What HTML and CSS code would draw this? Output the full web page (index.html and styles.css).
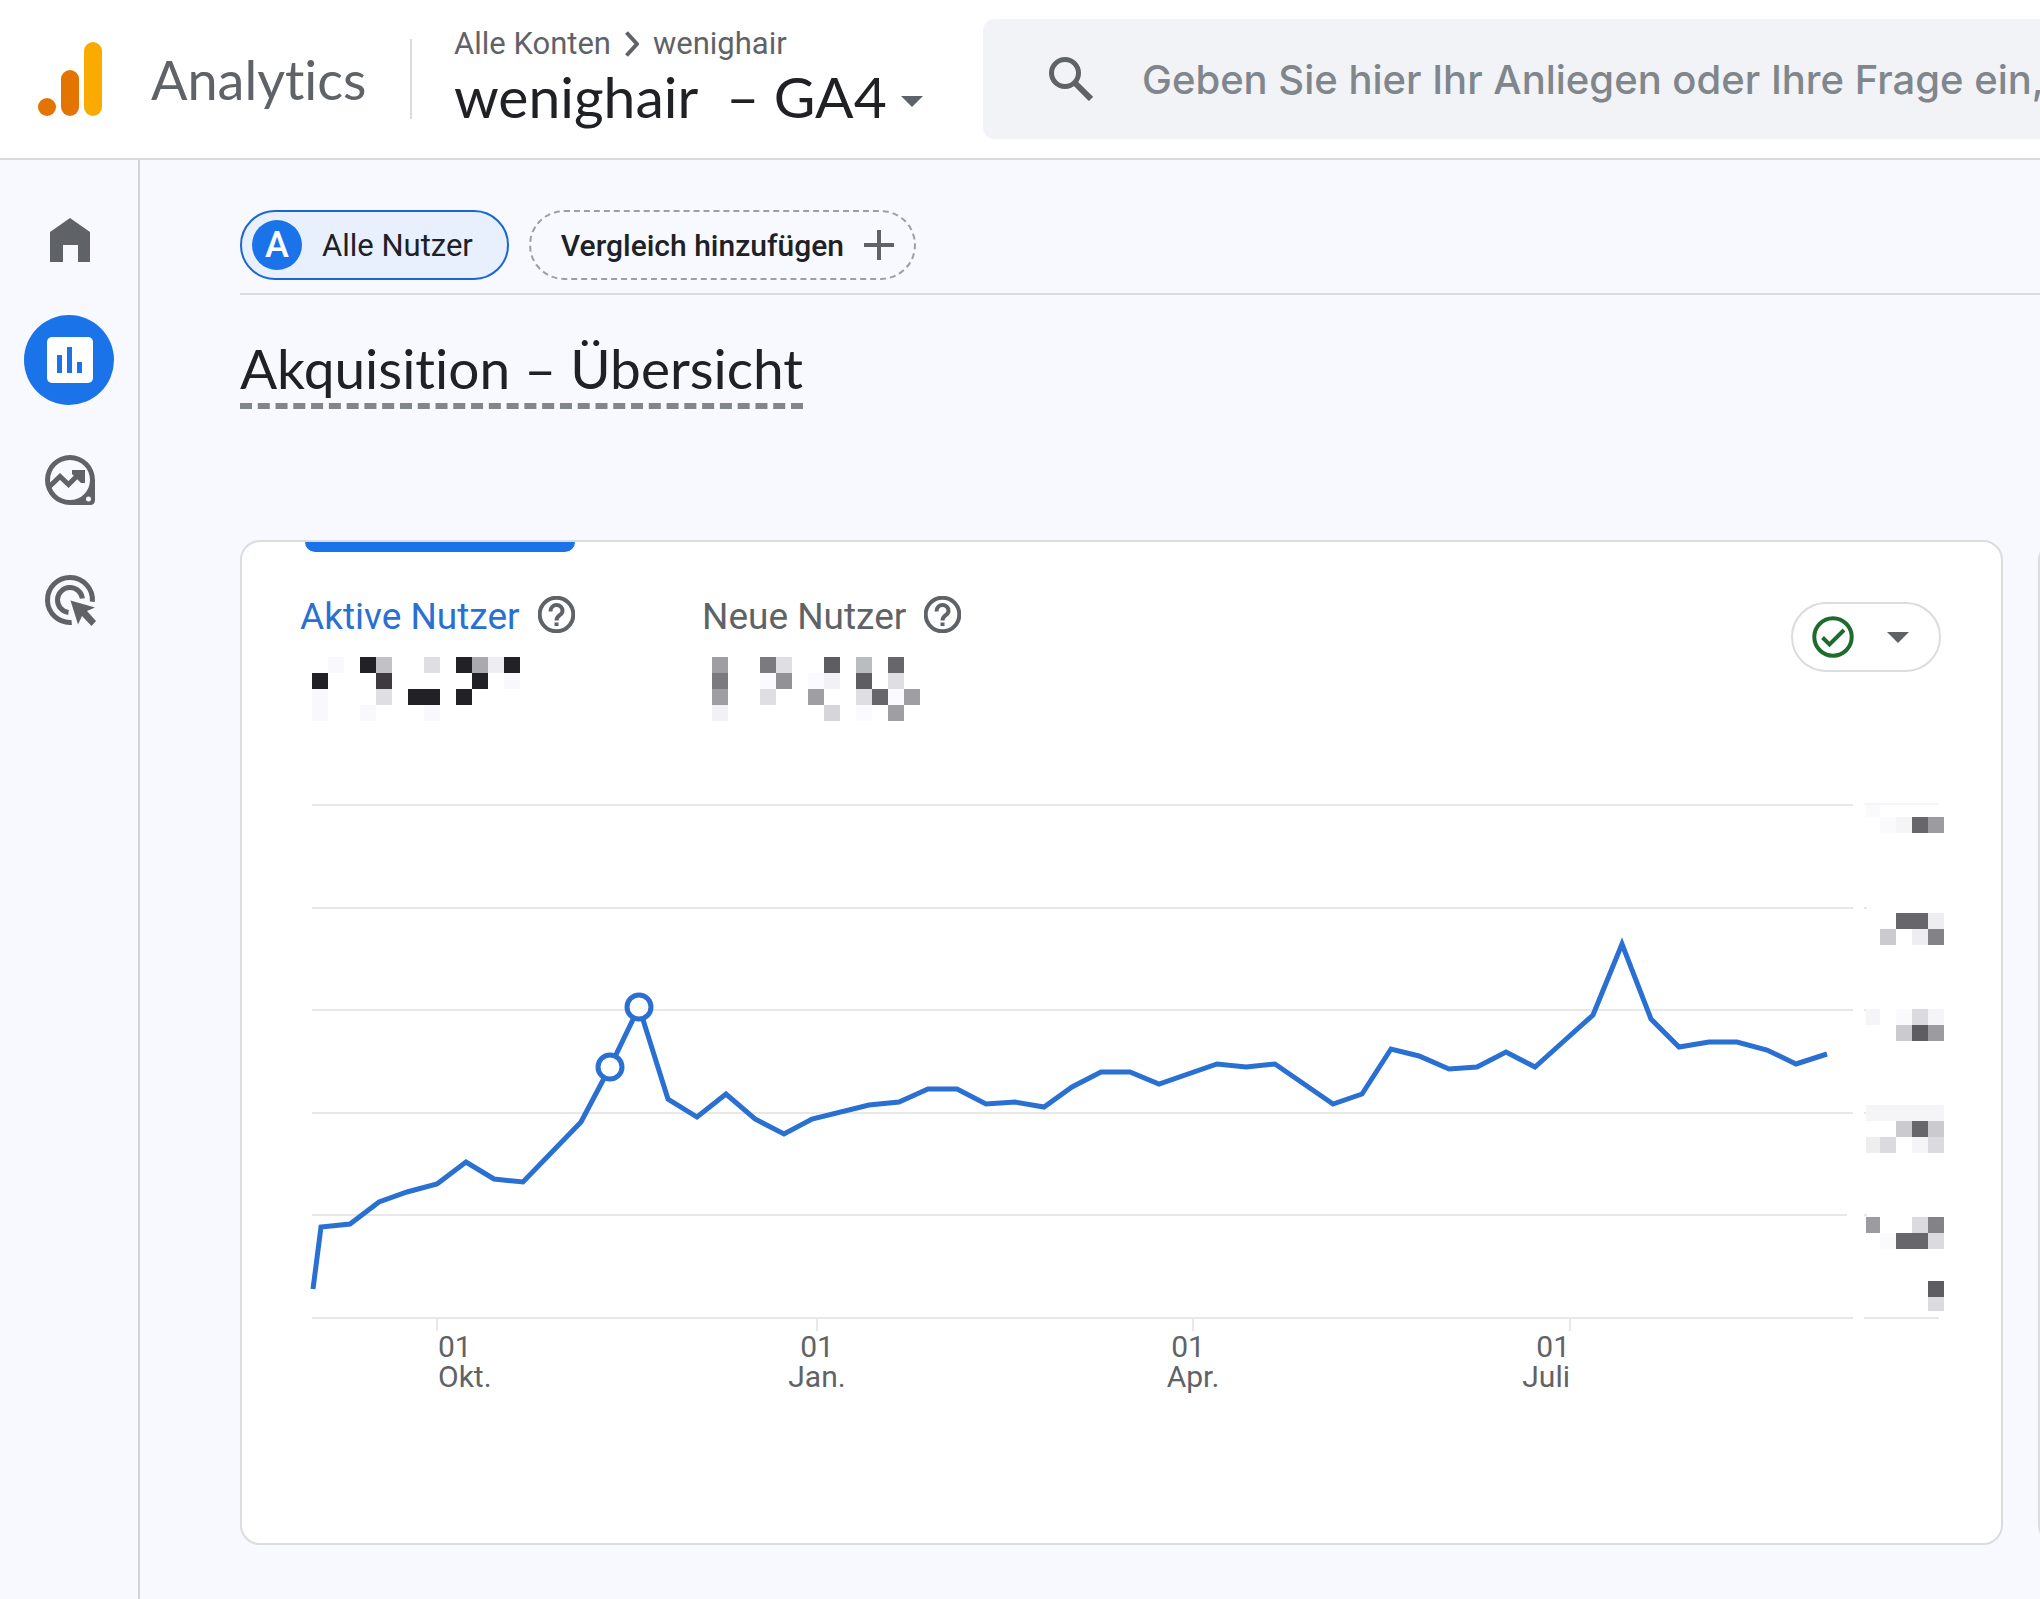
FILE: index.html
```html
<!DOCTYPE html>
<html lang="de">
<head>
    <meta charset="UTF-8">
    <meta name="viewport" content="width=device-width, initial-scale=1.0">
    <title>Analytics | Akquisition – Übersicht</title>
    <link rel="stylesheet" href="styles.css">
</head>
<body>
    <header class="header">
        <a class="brand" href="#">
            <svg class="logo" viewBox="0 0 64 74" aria-hidden="true">
                <circle cx="9" cy="65" r="9" fill="#e37400"/>
                <rect x="23" y="28" width="18" height="46" rx="9" fill="#e37400"/>
                <rect x="46" y="0" width="18" height="74" rx="9" fill="#f9ab00"/>
            </svg>
            <span class="brand-name">Analytics</span>
        </a>

        <div class="account">
            <nav class="breadcrumb" aria-label="Konto">
                <a href="#">Alle Konten</a>
                <svg viewBox="0 0 14 26" aria-hidden="true"><path d="M1.5 1.5L12 13L1.5 24.500" fill="none" stroke="#5f6368" stroke-width="4"/></svg>
                <a href="#">wenighair</a>
            </nav>
            <button class="property" type="button">
                <span>wenighair&nbsp; – GA4</span>
                <svg class="caret" viewBox="0 0 22 11" aria-hidden="true"><path d="M0 0H22L11 11Z"/></svg>
            </button>
        </div>

        <label class="search">
            <svg viewBox="0 0 44 44" aria-hidden="true">
                <circle cx="16" cy="16" r="13.500" fill="none" stroke="#5f6368" stroke-width="5"/>
                <path d="M26 26L42 42" stroke="#5f6368" stroke-width="6"/>
            </svg>
            <input type="text" aria-label="Suche" placeholder="Geben Sie hier Ihr Anliegen oder Ihre Frage ein,">
        </label>
    </header>

    <div class="layout">
        <nav class="sidebar" aria-label="Navigation">
            <a class="nav-item" href="#" aria-label="Startseite">
                <svg viewBox="-1 0 60 60"><path d="M10 22L30 8L50 22V52H38V35H23V52H10Z" fill="#5f6368"/></svg>
            </a>
            <a class="nav-item active" href="#" aria-label="Berichte">
                <svg viewBox="0 0 60 60">
                    <rect x="8" y="7" width="46" height="46" rx="5" fill="#fff"/>
                    <path d="M18 25h5v18h-5zM28 17h5v26h-5zM38 32h5v11h-5z" fill="#1a73e8"/>
                </svg>
            </a>
            <a class="nav-item" href="#" aria-label="Explorative Datenanalyse">
                <svg viewBox="-1 0 60 60" fill="#5f6368">
                    <path fill-rule="evenodd" d="M30 5A25 25 0 0 1 55 30V50Q55 55 50 55H30A25 25 0 0 1 30 5ZM30 10A20 20 0 0 0 30 50A20 20 0 0 0 30 10ZM48.500 46.500A2.500 2.500 0 0 0 48.500 51.500A2.500 2.500 0 0 0 48.500 46.500Z"/>
                    <path d="M8 38L20 26.500L28.500 34.500L41 22" fill="none" stroke="#5f6368" stroke-width="5"/>
                    <path d="M32 20H45V33H41L32 24Z"/>
                </svg>
            </a>
            <a class="nav-item" href="#" aria-label="Werbung">
                <svg viewBox="-1 0 60 60" fill="none" stroke="#5f6368" stroke-width="5">
                    <path d="M31.700 52.400A22.500 22.500 0 1 1 52.400 31.700"/>
                    <path d="M28.500 42.400A12.500 12.500 0 1 1 42.400 28.500"/>
                    <path d="M30.500 30.500L55 37.500L47 41L56 51L51.500 56L42 46L38 54.500Z" fill="#5f6368" stroke="none"/>
                </svg>
            </a>
        </nav>

        <main class="main">
            <div class="comparisons">
                <button class="chip chip-active" type="button">
                    <span class="avatar">A</span>
                    <span>Alle Nutzer</span>
                </button>
                <button class="chip chip-add" type="button">
                    <span>Vergleich hinzufügen</span>
                    <svg viewBox="0 0 30 30" aria-hidden="true"><path d="M15 0V30M0 15H30" stroke="#5f6368" stroke-width="4"/></svg>
                </button>
            </div>

            <h1 class="title">Akquisition – Übersicht</h1>

            <div class="cards">
                <section class="card">
                    <div class="card-head">
                        <div class="tabs" role="tablist">
                            <button class="tab selected" type="button" role="tab" aria-selected="true">
                                <span class="tab-label">
                                    Aktive Nutzer
                                    <svg viewBox="0 0 37 37" aria-hidden="true">
                                        <circle cx="18.500" cy="18.500" r="16.800"/>
                                        <path d="M12.500 15.500C12.500 7 24.500 7 24.500 15C24.500 19.500 18.500 19 18.500 24.500M18.500 26.500V30"/>
                                    </svg>
                                </span>
                                <svg class="masked" viewBox="0 0 240 64" shape-rendering="crispEdges" aria-hidden="true">
                                    <g fill="#222126">
                                        <path d="M60 0h16v16h-16zM156 0h16v16h-16zM204 0h16v16h-16zM12 16h16v16h-16zM172 16h16v16h-16zM108 32h32v16h-32zM156 32h16v16h-16z"/>
                                    </g>
                                    <path d="M76 16h16v16h-16z" fill="#3d3b40"/>
                                    <path d="M172 0h16v16h-16z" fill="#aaa9ad"/>
                                    <path d="M76 0h16v16h-16z" fill="#c2c1c6"/>
                                    <path d="M124 0h16v16h-16zM76 32h16v16h-16z" fill="#dfdee2"/>
                                    <path d="M188 0h16v16h-16z" fill="#ededf2"/>
                                    <path d="M28 0h16v16h-16zM204 16h16v16h-16zM60 48h16v16h-16zM12 32h16v32h-16zM124 48h16v16h-16z" fill="#f9f9fc"/>
                                </svg>
                            </button>
                            <button class="tab" type="button" role="tab" aria-selected="false">
                                <span class="tab-label">
                                    Neue Nutzer
                                    <svg viewBox="0 0 37 37" aria-hidden="true">
                                        <circle cx="18.500" cy="18.500" r="16.800"/>
                                        <path d="M12.500 15.500C12.500 7 24.500 7 24.500 15C24.500 19.500 18.500 19 18.500 24.500M18.500 26.500V30"/>
                                    </svg>
                                </span>
                                <svg class="masked" viewBox="0 0 240 64" shape-rendering="crispEdges" aria-hidden="true">
                                    <path d="M122 0h16v16h-16zM154 16h16v16h-16z" fill="#5e5d62"/>
                                    <path d="M186 0h16v16h-16zM170 32h16v16h-16z" fill="#67666b"/>
                                    <path d="M58 0h16v16h-16zM10 16h16v16h-16z" fill="#7b7a7f"/>
                                    <path d="M74 16h16v16h-16z" fill="#929296"/>
                                    <path d="M10 0h16v16h-16zM10 32h16v16h-16zM106 32h16v16h-16zM202 32h16v16h-16zM186 48h16v16h-16z" fill="#9f9ea3"/>
                                    <path d="M154 0h16v16h-16z" fill="#bbbcc0"/>
                                    <path d="M122 48h16v16h-16z" fill="#d6d5da"/>
                                    <path d="M74 0h16v16h-16zM186 16h16v16h-16zM58 32h16v16h-16zM154 32h16v16h-16z" fill="#dfdee3"/>
                                    <path d="M122 16h16v16h-16zM10 48h16v16h-16z" fill="#f1f1f6"/>
                                    <path d="M58 16h16v16h-16zM106 16h16v16h-16zM186 32h16v16h-16zM154 48h16v16h-16z" fill="#fafaff"/>
                                </svg>
                            </button>
                        </div>

                        <button class="status" type="button" aria-label="Datenqualität">
                            <svg class="check" viewBox="0 0 42 42" aria-hidden="true">
                                <circle cx="21" cy="21" r="18.700"/>
                                <path d="M10.500 21.500L17.500 28.500L32 14"/>
                            </svg>
                            <svg class="caret" viewBox="0 0 22 11" aria-hidden="true"><path d="M0 0H22L11 11Z"/></svg>
                        </button>
                    </div>

                    <svg class="chart" viewBox="0 0 1629 600" role="img" aria-label="Aktive Nutzer im Zeitverlauf">
                        <g class="grid">
                            <path d="M0 5H1541M0 108H1541M0 210H1541M0 313H1541M0 415H1535M0 518H1541"/>
                            <path d="M1552 108H1555M1552 210H1555M1552 313H1555M1552 415H1555M1552 518H1627"/>
                            <path d="M125 518V531M505 518V531M881 518V531M1258 518V531"/>
                            <path class="faint" d="M1552 4H1627"/>
                        </g>

                        <polyline class="series" points="1,489 9,427 38,424 67,402 95,392 125,384 154,362 182,379 211,382 269,322 298,267 327,207 356,299 385,317 414,294 443,319 472,334 500,319 557,305 587,302 616,289 645,289 674,304 703,302 732,307 760,287 789,272 818,272 847,284 905,264 934,267 963,264 1021,304 1050,294 1079,249 1107,256 1137,269 1165,267 1194,252 1223,267 1252,241 1281,215 1310,144 1339,219 1367,247 1397,242 1425,242 1455,250 1484,264 1515,254"/>
                        <circle class="marker" cx="298" cy="267" r="12"/>
                        <circle class="marker" cx="327" cy="207" r="12"/>

                        <g class="axis">
                            <text x="126" y="557">01</text>
                            <text x="126" y="587">Okt.</text>
                            <text class="middle" x="505" y="557">01</text>
                            <text class="middle" x="505" y="587">Jan.</text>
                            <text class="middle" x="876" y="557">01</text>
                            <text class="middle" x="881" y="587">Apr.</text>
                            <text class="end" x="1258" y="557">01</text>
                            <text class="end" x="1258" y="587">Juli</text>
                        </g>

                        <!-- masked y-axis values -->
                        <g shape-rendering="crispEdges">
                            <path d="M1600 17h16v16h-16zM1584 113h32v16h-32zM1600 321h16v16h-16zM1584 433h32v16h-32z" fill="#67666b"/>
                            <path d="M1600 225h16v16h-16zM1616 481h16v16h-16z" fill="#5e5d62"/>
                            <path d="M1616 129h16v16h-16zM1616 417h16v16h-16z" fill="#838287"/>
                            <path d="M1616 17h16v16h-16zM1616 225h16v16h-16zM1554 417h14v16h-14z" fill="#9c9ba0"/>
                            <path d="M1568 129h16v16h-16zM1584 225h16v16h-16zM1584 321h16v16h-16zM1616 321h16v16h-16z" fill="#cbcacf"/>
                            <path d="M1600 209h16v16h-16zM1568 337h16v16h-16zM1616 337h16v16h-16zM1600 417h16v16h-16zM1616 433h16v16h-16zM1616 497h16v14h-16z" fill="#dbdadf"/>
                            <path d="M1616 113h16v16h-16zM1600 129h16v16h-16zM1554 337h14v16h-14z" fill="#eeeef1"/>
                            <path d="M1584 17h16v16h-16zM1554 209h14v16h-14zM1616 209h16v16h-16zM1554 305h78v16h-78zM1600 337h16v16h-16z" fill="#f5f5f7"/>
                            <path d="M1554 5h14v12h-14zM1568 17h16v16h-16zM1584 209h16v16h-16zM1568 433h16v16h-16z" fill="#fafafd"/>
                        </g>
                    </svg>
                </section>
                <section class="card"></section>
            </div>
        </main>
    </div>
</body>
</html>
```
FILE: styles.css
```css
* {
    margin: 0;
    padding: 0;
    box-sizing: border-box;
}

body {
    display: flex;
    flex-direction: column;
    min-height: 100vh;
    font-family: Roboto, sans-serif;
    font-size: 30px;
    font-variant-ligatures: none;
    color: #202124;
    background: #f8f9fe;
    overflow-x: hidden;
}

a {
    color: inherit;
    text-decoration: none;
}

button {
    font: inherit;
    font-variant-ligatures: none;
    color: inherit;
    background: none;
    border: none;
    cursor: pointer;
}

svg {
    display: block;
    flex: none;
}

/* Header */
.header {
    display: flex;
    align-items: center;
    height: 160px;
    background: #fff;
    border-bottom: 2px solid #dadadc;
}

.brand {
    display: flex;
    align-items: center;
    gap: 49px;
    width: 412px;
    height: 80px;
    padding-left: 38px;
    border-right: 2px solid #dadce0;
}

.logo {
    width: 64px;
    height: 74px;
}

.brand-name {
    font-family: Lato, sans-serif;
    font-size: 54px;
    color: #5f6368;
}

.account {
    display: flex;
    flex-direction: column;
    gap: 2px;
    align-self: flex-start;
    width: 571px;
    padding: 26px 0 0 42px;
}

.breadcrumb {
    display: flex;
    align-items: center;
    gap: 14px;
    font-size: 31px;
    line-height: 36px;
    color: #5f6368;
}

.breadcrumb svg {
    width: 14px;
    height: 26px;
}

.property {
    display: flex;
    align-items: center;
    gap: 14px;
    font-family: Lato, sans-serif;
    font-size: 57px;
    line-height: 64px;
    white-space: nowrap;
}

.caret {
    width: 22px;
    height: 11px;
    fill: #5f6368;
}

.property .caret {
    margin-top: 10px;
}

.search {
    display: flex;
    flex: 1;
    align-items: center;
    gap: 49px;
    min-width: 0;
    height: 120px;
    padding-left: 66px;
    background: #f1f3f6;
    border-radius: 12px 0 0 12px;
}

.search svg {
    width: 44px;
    height: 44px;
}

.search input {
    flex: 1;
    min-width: 0;
    font-family: Inter, sans-serif;
    font-size: 40px;
    font-weight: 500;
    background: none;
    border: none;
    outline: none;
}

.search input::placeholder {
    color: #80868b;
}

/* Layout */
.layout {
    display: flex;
    flex: 1;
}

.sidebar {
    display: flex;
    flex: none;
    flex-direction: column;
    align-items: center;
    gap: 30px;
    width: 140px;
    padding-top: 35px;
    border-right: 2px solid #d2d3d9;
}

.nav-item {
    display: flex;
    align-items: center;
    justify-content: center;
    width: 90px;
    height: 90px;
    border-radius: 50%;
}

.nav-item svg {
    width: 60px;
    height: 60px;
}

.nav-item.active {
    background: #1a73e8;
}

.main {
    flex: 1;
    min-width: 0;
    padding: 50px 0 54px 100px;
    overflow: hidden;
}

/* Comparison chips */
.comparisons {
    display: flex;
    gap: 20px;
    padding-bottom: 13px;
    border-bottom: 2px solid #dadce0;
}

.chip {
    display: flex;
    align-items: center;
    height: 70px;
    border-radius: 35px;
}

.chip-active {
    gap: 20px;
    padding: 0 34px 0 10px;
    font-size: 31px;
    background: #e8f0fe;
    border: 2px solid #1967d2;
}

.avatar {
    width: 50px;
    height: 50px;
    font-size: 36px;
    font-weight: 500;
    line-height: 50px;
    text-align: center;
    color: #fff;
    background: #1a73e8;
    border-radius: 50%;
}

.chip-add {
    gap: 20px;
    padding: 0 20px 0 30px;
    font-weight: 500;
    border: 2px dashed #9aa0a6;
}

.chip-add svg {
    width: 30px;
    height: 30px;
}

.title {
    display: inline-block;
    margin: 38px 0 131px;
    font-family: Lato, sans-serif;
    font-size: 55px;
    font-weight: 400;
    line-height: 70px;
    vertical-align: top;
    border-bottom: 6px dashed #80868b;
}

/* Cards */
.cards {
    display: grid;
    grid-template-columns: calc(100% - 37px) 60%;
    gap: 35px;
}

.card {
    padding: 0 60px 143px 58px;
    background: #fff;
    border: 2px solid #dadce0;
    border-radius: 20px;
}

.card-head {
    display: flex;
    align-items: flex-start;
    justify-content: space-between;
}

.tabs {
    display: flex;
}

.tab {
    width: 402px;
    color: #5f6368;
}

.tab::before {
    content: "";
    display: block;
    width: 270px;
    height: 10px;
    margin-left: 5px;
    border-radius: 0 0 10px 10px;
}

.tab.selected {
    color: #2a70d2;
}

.tab.selected::before {
    background: #1a73e8;
}

.tab-label {
    display: flex;
    align-items: flex-start;
    gap: 18px;
    margin-top: 40px;
    font-size: 37px;
    line-height: 50px;
}

.tab-label svg {
    width: 37px;
    height: 37px;
    margin-top: 4px;
    fill: none;
    stroke: #5f6368;
    stroke-width: 4;
}

.masked {
    width: 240px;
    height: 64px;
    margin-top: 15px;
}

.status {
    display: flex;
    align-items: center;
    justify-content: space-between;
    width: 150px;
    height: 70px;
    margin-top: 60px;
    padding: 0 30px 0 19px;
    border: 2px solid #dadce0;
    border-radius: 35px;
}

.check {
    width: 42px;
    height: 42px;
    fill: none;
    stroke: #1e6b2e;
    stroke-width: 4;
}

/* Chart */
.chart {
    width: 100%;
    margin-top: 79px;
    padding-left: 12px;
    overflow: visible;
}

.grid {
    fill: none;
    stroke: #e8e8e8;
    stroke-width: 2;
}

.grid .faint {
    stroke: #f5f5f7;
}

.series {
    fill: none;
    stroke: #2a70d2;
    stroke-width: 5;
}

.marker {
    fill: #fff;
    stroke: #2a70d2;
    stroke-width: 5;
}

.axis {
    font-size: 30px;
    fill: #5f6368;
}

.axis .middle {
    text-anchor: middle;
}

.axis .end {
    text-anchor: end;
}
```
